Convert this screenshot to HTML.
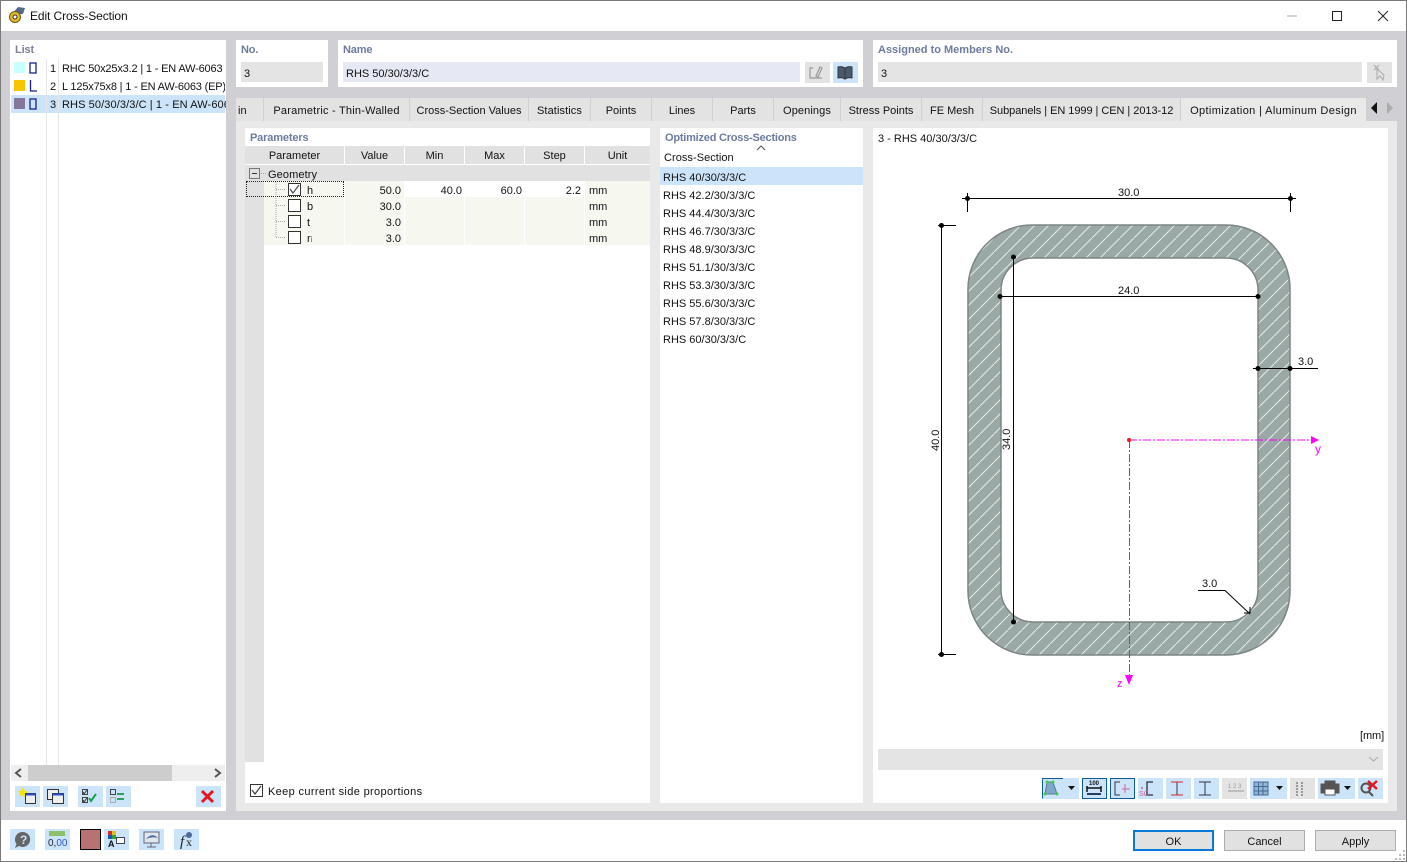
<!DOCTYPE html>
<html><head><meta charset="utf-8"><style>
html,body{margin:0;padding:0;width:1407px;height:862px;overflow:hidden;background:#fff}
body{font-family:"Liberation Sans",Arial,sans-serif;font-size:11px;color:#111;position:relative}
div{position:absolute;box-sizing:border-box;white-space:nowrap}
.p{background:#fff}
.h{font-weight:bold;color:#6e7b9e;font-size:11px;letter-spacing:-.15px}
.f{background:#e4e4e4;font-size:11px;padding:6px 0 0 3px;height:20px}
.tab{top:98px;height:23px;background:#e3e3e3;border-right:1px solid #d0d0d4;text-align:center;padding-top:7px;font-size:11px}
.hd{top:146px;height:18px;background:#e1e1e1;border-right:1px solid #fff;text-align:center;padding-top:4px}
.v{text-align:right;height:16px;line-height:16px}
.o{left:663px;height:18px;line-height:18px}
.cb{width:13px;height:13px;border:1px solid #333;background:#fff}
.b{background:#cbe4f9;width:25px;height:21px}
.g{background:#e3e3e3;width:25px;height:21px}
.btn{top:830px;height:21px;background:#e1e1e1;border:1px solid #adadad;text-align:center;line-height:21px;font-size:11px;padding-top:1px}
svg{position:absolute;overflow:visible}
</style></head><body>
<div style="left:0;top:0;width:1407px;height:862px;border:1px solid #7a7a7a;z-index:9;pointer-events:none"></div>
<div style="left:0;top:31px;width:1407px;height:789px;background:#d0d0d4"></div>

<svg style="left:8px;top:6px" width="18" height="18" viewBox="0 0 18 18"><path d="M4 8 L10 1 L17 2 L15 8 Z" fill="#54688c"/><circle cx="7" cy="11" r="5.500" fill="#e4b92a" stroke="#6a5a1a"/><circle cx="7" cy="11" r="2" fill="#fff" stroke="#333"/></svg>
<div style="left:30px;top:9px;font-size:12px;letter-spacing:-.1px">Edit Cross-Section</div>
<svg style="left:1280px;top:8px" width="115" height="16" fill="none" stroke="#222"><path d="M7 8H17" stroke="#aaa"/><rect x="52.500" y="3.500" width="9" height="9"/><path d="M98 3L108 13M108 3L98 13"/></svg>

<!-- List -->
<div class="p" style="left:10px;top:40px;width:216px;height:771px"></div>
<div class="h" style="left:15px;top:44px;color:#7b7f9b">List</div>
<div style="left:11px;top:95px;width:214px;height:18px;background:#cbe4f9"></div>
<div style="left:46px;top:59px;width:1px;height:706px;background:#e6e6e6"></div>
<div style="left:58px;top:59px;width:1px;height:706px;background:#e6e6e6"></div>
<div style="left:14px;top:62px;width:11px;height:11px;background:#c8ffff"></div>
<div style="left:14px;top:80px;width:11px;height:11px;background:#f7c600"></div>
<div style="left:14px;top:98px;width:11px;height:11px;background:#85779a"></div>
<svg style="left:28px;top:60px" width="12" height="50" fill="none" stroke="#16228a" stroke-width="1.300"><rect x="2" y="3" width="6" height="10"/><path d="M2.500 20V31H9"/><rect x="2" y="39" width="6" height="10"/></svg>
<div style="left:50px;top:63px">1</div><div style="left:62px;top:63px;width:163px;overflow:hidden;letter-spacing:-.17px">RHC 50x25x3.2 | 1 - EN AW-6063</div>
<div style="left:50px;top:81px">2</div><div style="left:62px;top:81px;width:163px;overflow:hidden;letter-spacing:-.17px">L 125x75x8 | 1 - EN AW-6063 (EP)</div>
<div style="left:50px;top:99px">3</div><div style="left:62px;top:99px;width:164px;overflow:hidden;letter-spacing:.1px">RHS 50/30/3/3/C | 1 - EN AW-6063</div>
<div style="left:11px;top:765px;width:214px;height:16px;background:#eee"></div>
<div style="left:28px;top:765px;width:144px;height:16px;background:#cdcdcd"></div>
<svg style="left:11px;top:765px" width="214" height="16" fill="none" stroke="#555" stroke-width="2"><path d="M10 4L5 8L10 12M204 4L209 8L204 12"/></svg>
<div class="b" style="left:15px;top:786px"></div><div class="b" style="left:43px;top:786px"></div>
<div class="b" style="left:78px;top:786px"></div><div class="b" style="left:106px;top:786px"></div>
<div class="b" style="left:196px;top:786px"></div>
<svg style="left:15px;top:786px" width="210" height="21" fill="none">
<path d="M8 1L10 5L13 6L10 8L10 11L7 9L4 11L5 7L3 5L6 5Z" fill="#f5e600"/><rect x="10.500" y="7.500" width="10" height="10" fill="#eee" stroke="#333"/><rect x="10.500" y="7.500" width="10" height="2" fill="#2b4fd0"/>
<rect x="32.500" y="3.500" width="11" height="10" fill="#eee" stroke="#333"/><rect x="37.500" y="7.500" width="11" height="10" fill="#eee" stroke="#333"/><rect x="37.500" y="7.500" width="11" height="2" fill="#2b4fd0"/>
<rect x="67.500" y="3.500" width="5" height="5" stroke="#444"/><rect x="67.500" y="11.500" width="5" height="5" stroke="#444"/><path d="M68 6l1 2l3-4M68 14l1 2l3-4" stroke="#333"/><path d="M74 12l2 3l5-7" stroke="#1aa050" stroke-width="2"/>
<rect x="95.500" y="3.500" width="5" height="5" stroke="#444"/><rect x="95.500" y="11.500" width="5" height="5" stroke="#aaa"/><path d="M102 8h7M109 13h-7" stroke="#2aa060" stroke-width="2"/>
<path d="M187 5L198 16M198 5L187 16" stroke="#e8141c" stroke-width="3"/></svg>

<!-- No / Name / Assigned -->
<div class="p" style="left:236px;top:40px;width:92px;height:47px"></div>
<div class="h" style="left:241px;top:44px">No.</div>
<div class="f" style="left:241px;top:62px;width:82px">3</div>
<div class="p" style="left:338px;top:40px;width:525px;height:47px"></div>
<div class="h" style="left:343px;top:44px">Name</div>
<div class="f" style="left:343px;top:62px;width:457px;background:#e6e8f4">RHS 50/30/3/3/C</div>
<div class="g" style="left:805px;top:62px"></div><div class="b" style="left:833px;top:62px"></div>
<svg style="left:805px;top:62px" width="53" height="21" fill="none"><path d="M8 6H5V16H17M11 14L15 5L17 6L13 15Z" stroke="#999" stroke-width="1.200"/><path d="M33 5Q37 4 40 6V17Q37 15 33 16ZM47 5Q43 4 40 6V17Q43 15 47 16Z" fill="#4a5a6a" stroke="#334"/></svg>
<div class="p" style="left:873px;top:40px;width:524px;height:47px"></div>
<div class="h" style="left:878px;top:44px;letter-spacing:0">Assigned to Members No.</div>
<div class="f" style="left:878px;top:62px;width:484px">3</div>
<div class="g" style="left:1367px;top:62px"></div>
<svg style="left:1367px;top:62px" width="25" height="21" fill="none" stroke="#aaa"><path d="M7 3L12 8M12 3L7 8M10 7L10 17L13 14L16 18L17 13Z"/></svg>

<!-- Tabs -->
<div style="left:236px;top:121px;width:1161px;height:690px;background:#e9e9e9"></div>
<div class="tab" style="left:236px;width:28px;text-align:left;padding-left:2px;border-left:0">in</div>
<div class="tab" style="left:264px;width:146px;letter-spacing:.22px">Parametric - Thin-Walled</div>
<div class="tab" style="left:410px;width:119px;">Cross-Section Values</div>
<div class="tab" style="left:529px;width:62px;letter-spacing:.1px">Statistics</div>
<div class="tab" style="left:591px;width:61px">Points</div>
<div class="tab" style="left:652px;width:61px">Lines</div>
<div class="tab" style="left:713px;width:61px">Parts</div>
<div class="tab" style="left:774px;width:67px;letter-spacing:.1px">Openings</div>
<div class="tab" style="left:841px;width:81px">Stress Points</div>
<div class="tab" style="left:922px;width:61px">FE Mesh</div>
<div class="tab" style="left:983px;width:198px;letter-spacing:-.05px">Subpanels | EN 1999 | CEN | 2013-12</div>
<div class="tab" style="left:1181px;width:185px;background:#e9e9e9;border:0;letter-spacing:.37px">Optimization | Aluminum Design</div>
<svg style="left:1368px;top:101px" width="28" height="14"><path d="M9 1L3 7L9 13Z" fill="#111"/><path d="M19 1L25 7L19 13Z" fill="#aaa"/></svg>

<!-- Parameters -->
<div class="p" style="left:245px;top:128px;width:405px;height:675px"></div>
<div class="h" style="left:250px;top:132px">Parameters</div>
<div class="hd" style="left:245px;width:100px">Parameter</div>
<div class="hd" style="left:345px;width:60px">Value</div>
<div class="hd" style="left:405px;width:60px">Min</div>
<div class="hd" style="left:465px;width:60px">Max</div>
<div class="hd" style="left:525px;width:60px">Step</div>
<div class="hd" style="left:585px;width:65px;border:0">Unit</div>
<div style="left:245px;top:165px;width:405px;height:16px;background:#e1e1e1"></div>
<div style="left:245px;top:181px;width:19px;height:581px;background:#e1e1e1"></div>
<div style="left:264px;top:181px;width:386px;height:64px;background:#f6f8f0"></div>
<div style="left:405px;top:181px;width:180px;height:16px;background:#fff"></div>
<div style="left:344px;top:181px;width:1px;height:64px;background:#fff"></div>
<div style="left:404px;top:181px;width:1px;height:64px;background:#fff"></div>
<div style="left:464px;top:181px;width:1px;height:64px;background:#fff"></div>
<div style="left:524px;top:181px;width:1px;height:64px;background:#fff"></div>
<div style="left:584px;top:181px;width:1px;height:64px;background:#fff"></div>
<div style="left:246px;top:181px;width:98px;height:16px;border:1px dotted #222"></div>
<svg style="left:249px;top:168px" width="50" height="76" fill="none"><rect x="0.500" y="0.500" width="10" height="10" stroke="#777"/><path d="M3 5.500H8" stroke="#333"/><path d="M12 5.500H17M27 14V69M27 21.500H36M27 37.500H36M27 53.500H36M27 69.500H36" stroke="#aaa" stroke-dasharray="1 1"/></svg>
<div style="left:268px;top:169px;letter-spacing:.1px">Geometry</div>
<div class="cb" style="left:288px;top:183px"></div><div class="cb" style="left:288px;top:199px"></div><div class="cb" style="left:288px;top:215px"></div><div class="cb" style="left:288px;top:231px"></div>
<svg style="left:288px;top:183px" width="13" height="13" fill="none"><path d="M2 6L5 10L11 2" stroke="#555" stroke-width="1.300"/></svg>
<div style="left:307px;top:185px">h</div><div style="left:307px;top:201px">b</div><div style="left:307px;top:217px">t</div><div style="left:307px;top:233px">r<span style="font-size:8px;color:#3a6ea5">i</span></div>
<div class="v" style="left:345px;top:183px;width:56px">50.0</div><div class="v" style="left:345px;top:199px;width:56px">30.0</div><div class="v" style="left:345px;top:215px;width:56px">3.0</div><div class="v" style="left:345px;top:231px;width:56px">3.0</div>
<div class="v" style="left:405px;top:183px;width:57px">40.0</div><div class="v" style="left:465px;top:183px;width:57px">60.0</div><div class="v" style="left:525px;top:183px;width:56px">2.2</div>
<div style="left:589px;top:185px">mm</div><div style="left:589px;top:201px">mm</div><div style="left:589px;top:217px">mm</div><div style="left:589px;top:233px">mm</div>
<div class="cb" style="left:250px;top:784px"></div>
<svg style="left:250px;top:784px" width="13" height="13" fill="none"><path d="M2 6L5 10L11 2" stroke="#444" stroke-width="1.300"/></svg>
<div style="left:268px;top:786px;letter-spacing:.35px">Keep current side proportions</div>

<!-- Optimized -->
<div class="p" style="left:660px;top:128px;width:203px;height:675px"></div>
<div class="h" style="left:665px;top:132px;letter-spacing:-.22px">Optimized Cross-Sections</div>
<div style="left:664px;top:152px;letter-spacing:.05px">Cross-Section</div>
<svg style="left:756px;top:145px" width="10" height="6" fill="none" stroke="#555"><path d="M1 5L5 1L9 5"/></svg>
<div style="left:660px;top:167px;width:203px;height:18px;background:#cbe4f9"></div>
<div class="o" style="top:169px">RHS 40/30/3/3/C</div>
<div class="o" style="top:187px">RHS 42.2/30/3/3/C</div>
<div class="o" style="top:205px">RHS 44.4/30/3/3/C</div>
<div class="o" style="top:223px">RHS 46.7/30/3/3/C</div>
<div class="o" style="top:241px">RHS 48.9/30/3/3/C</div>
<div class="o" style="top:259px">RHS 51.1/30/3/3/C</div>
<div class="o" style="top:277px">RHS 53.3/30/3/3/C</div>
<div class="o" style="top:295px">RHS 55.6/30/3/3/C</div>
<div class="o" style="top:313px">RHS 57.8/30/3/3/C</div>
<div class="o" style="top:331px">RHS 60/30/3/3/C</div>

<!-- Drawing -->
<div class="p" style="left:873px;top:128px;width:515px;height:675px"></div>
<div style="left:878px;top:133px">3 - RHS 40/30/3/3/C</div>
<svg style="left:0;top:0" width="1407" height="862" font-family="Liberation Sans, Arial, sans-serif" font-size="11">
<defs><pattern id="ht" width="14" height="14" patternUnits="userSpaceOnUse"><rect width="14" height="14" fill="#9aa9a6"/><path d="M-1 15L15 -1" stroke="#e4ebe9" stroke-width="1"/></pattern></defs>
<path fill-rule="evenodd" d="M1032 225H1226A64 64 0 0 1 1290 289V591A64 64 0 0 1 1226 655H1032A64 64 0 0 1 968 591V289A64 64 0 0 1 1032 225ZM1033 258A32 32 0 0 0 1001 290V590A32 32 0 0 0 1033 622H1226A32 32 0 0 0 1258 590V290A32 32 0 0 0 1226 258Z" fill="url(#ht)" stroke="#7b8684" stroke-width="1.500"/>
<g stroke="#000" fill="none">
<path d="M962 198.500H1296M967.500 193V212M1290.500 193V212"/>
<path d="M938 225.500H956M941.500 225V655M938 654.500H956"/>
<path d="M1000 296.500H1259M1013.500 256V624"/>
<path d="M1253 368.500H1318"/>
<path d="M1198 590.500H1225L1250 614M1244 613H1250V607"/>
</g>
<g fill="#000"><circle cx="967.500" cy="198.500" r="2.500"/><circle cx="1290.500" cy="198.500" r="2.500"/><circle cx="941.500" cy="225.500" r="2.500"/><circle cx="941.500" cy="654.500" r="2.500"/><circle cx="1000" cy="296.500" r="2.500"/><circle cx="1258" cy="296.500" r="2.500"/><circle cx="1013.500" cy="257" r="2.500"/><circle cx="1013.500" cy="622" r="2.500"/><circle cx="1258" cy="368.500" r="2.500"/><circle cx="1290" cy="368.500" r="2.500"/></g>
<text x="1118" y="196" fill="#111">30.0</text><text x="1118" y="294" fill="#111">24.0</text><text x="1298" y="365" fill="#111">3.0</text><text x="1202" y="587" fill="#111">3.0</text>
<text transform="translate(939 451) rotate(-90)" fill="#111">40.0</text><text transform="translate(1010 450) rotate(-90)" fill="#111">34.0</text>
<path d="M1129 440H1312" stroke="#f0f" stroke-dasharray="8 2 2 2" fill="none"/><path d="M1129.500 440V676" stroke="#e010d0" stroke-dasharray="8 2 2 2" fill="none"/>
<path d="M1311 436L1319 440L1311 444Z" fill="#f0f"/><path d="M1125 675L1129 685L1133 675Z" fill="#f0f"/>
<circle cx="1129" cy="440" r="2" fill="#f01818"/>
<text x="1315" y="453" fill="#f0f" font-size="12">y</text><text x="1117" y="687" fill="#f0f">z</text>
</svg>
<div style="left:1360px;top:730px;letter-spacing:-.1px">[mm]</div>
<div style="left:878px;top:749px;width:505px;height:21px;background:#e4e4e4"></div>
<svg style="left:1368px;top:756px" width="11" height="7" fill="none" stroke="#aaa"><path d="M1 1L5.500 5L10 1"/></svg>

<!-- Toolbar -->
<div class="b" style="left:1042px;top:778px;width:37px"></div>
<div class="b" style="left:1082px;top:778px"></div><div class="b" style="left:1110px;top:778px"></div>
<div class="b" style="left:1138px;top:778px"></div><div class="b" style="left:1166px;top:778px"></div><div class="b" style="left:1194px;top:778px"></div>
<div class="g" style="left:1222px;top:778px"></div>
<div class="b" style="left:1250px;top:778px;width:37px"></div>
<div class="g" style="left:1290px;top:778px"></div>
<div class="b" style="left:1318px;top:778px;width:37px"></div>
<div class="b" style="left:1358px;top:778px"></div>
<svg style="left:1042px;top:778px" width="345" height="21" fill="none">
<path d="M0.500 20.500V0.500H21M40.500 0.500H64.500V20.500H40.500ZM68.500 0.500H92.500V20.500H68.500Z" stroke="#0f5b96" stroke-width="1"/>
<path d="M5 4H11L15 16H3Z" fill="#7fa7c8" stroke="#5a7a98"/><g fill="#3ecf3e"><circle cx="5" cy="4" r="1.500"/><circle cx="11" cy="4" r="1.500"/><circle cx="3" cy="16" r="1.500"/><circle cx="15" cy="16" r="1.500"/></g>
<path d="M26 8H33L29.500 12ZM234 8H241L237.500 12ZM302 8H309L305.500 12Z" fill="#111"/>
<path d="M45 8V14M59 8V14M45 10H59" stroke="#111" stroke-width="1.500"/><path d="M45 16H59" stroke="#2a3a60" stroke-width="2"/><text x="47" y="7" font-size="6" font-weight="bold" fill="#111" font-family="Liberation Sans">100</text>
<path d="M78 4H73V17H78" stroke="#334"/><path d="M80 11H88M83 6V15" stroke="#d060a0"/>
<path d="M111 4H105V17H111" stroke="#234" stroke-width="1.300"/><circle cx="100" cy="10" r="1" fill="#d060a0"/><text x="97" y="18" font-size="7" fill="#d060a0" font-family="Liberation Sans">SC</text>
<path d="M129 4H141M129 17H141M135 4V17" stroke="#334"/><path d="M129 4H141M129 17H141" stroke="#e02030"/><path d="M157 4H169M157 17H169M163 4V17" stroke="#334"/>
<path d="M186 13H202" stroke="#999"/><text x="186" y="10" font-size="6" fill="#999" font-family="Liberation Sans">1 2 3</text>
<path d="M212 4H226V17H212ZM212 8.500H226M212 13H226M216.500 4V17M221 4V17" stroke="#446a96" fill="#94b4d4"/>
<path d="M255 4V18M260 4V18" stroke="#999" stroke-dasharray="2 1" stroke-width="2"/>
<path d="M283 6V3H293V6M279 6H297V15H279Z" fill="#555" stroke="#555"/><rect x="283" y="11" width="10" height="6" fill="#fff" stroke="#555"/>
<circle cx="324" cy="10" r="4.500" stroke="#555" stroke-width="2"/><path d="M327 14L331 18" stroke="#555" stroke-width="2"/><path d="M326 3L335 11M335 3L326 11" stroke="#e8141c" stroke-width="2.500"/>
</svg>

<!-- Bottom -->
<div class="b" style="left:10px;top:829px"></div><div class="b" style="left:45px;top:829px"></div>
<div style="left:80px;top:829px;width:21px;height:21px;background:#b87272;border:1px solid #000"></div>
<div class="b" style="left:104px;top:829px"></div><div class="b" style="left:139px;top:829px"></div><div class="b" style="left:174px;top:829px"></div>
<svg style="left:10px;top:829px" width="190" height="21" fill="none" font-family="Liberation Serif, serif">
<path d="M12 3A7.500 7.500 0 1 1 9 17L5 19L6.500 15A7.500 7.500 0 0 1 12 3Z" fill="#666"/><text x="10" y="15" font-size="12" font-weight="bold" fill="#cbe4f9" font-family="Liberation Sans">?</text>
<rect x="39" y="2" width="16" height="5" fill="#8ec06a"/><text x="38" y="17" font-size="10" fill="#223" font-family="Liberation Sans">0,<tspan fill="#2a5ac0">00</tspan></text>
<rect x="98" y="2" width="4" height="4" fill="#d03030"/><rect x="102" y="2" width="4" height="4" fill="#e0c020"/><rect x="98" y="6" width="4" height="4" fill="#2050c0"/><rect x="102" y="6" width="4" height="4" fill="#30a030"/><text x="98" y="18" font-size="9" font-weight="bold" fill="#111" font-family="Liberation Sans">A</text><rect x="106.500" y="8.500" width="8" height="6" fill="#fff" stroke="#445"/>
<rect x="134" y="3" width="15" height="11" fill="#dfe6ee" stroke="#667"/><path d="M136 10Q142 3 148 9Q142 7 136 10Z" fill="#4a6a9a"/><path d="M141 14V18M137 18H146" stroke="#667"/>
<text x="170" y="17" font-size="15" font-style="italic" fill="#222">f</text><text x="176" y="17" font-size="12" fill="#222">x</text><circle cx="179" cy="6" r="3" fill="#4a6a9a"/>
</svg>
<div class="btn" style="left:1133px;width:81px;border:2px solid #0a78d7;line-height:19px">OK</div>
<div class="btn" style="left:1224px;width:81px">Cancel</div>
<div class="btn" style="left:1315px;width:81px">Apply</div>
<svg style="left:1395px;top:850px" width="11" height="11" fill="#bbb"><rect x="8" y="0" width="2" height="2"/><rect x="4" y="4" width="2" height="2"/><rect x="8" y="4" width="2" height="2"/><rect x="0" y="8" width="2" height="2"/><rect x="4" y="8" width="2" height="2"/><rect x="8" y="8" width="2" height="2"/></svg>
</body></html>
